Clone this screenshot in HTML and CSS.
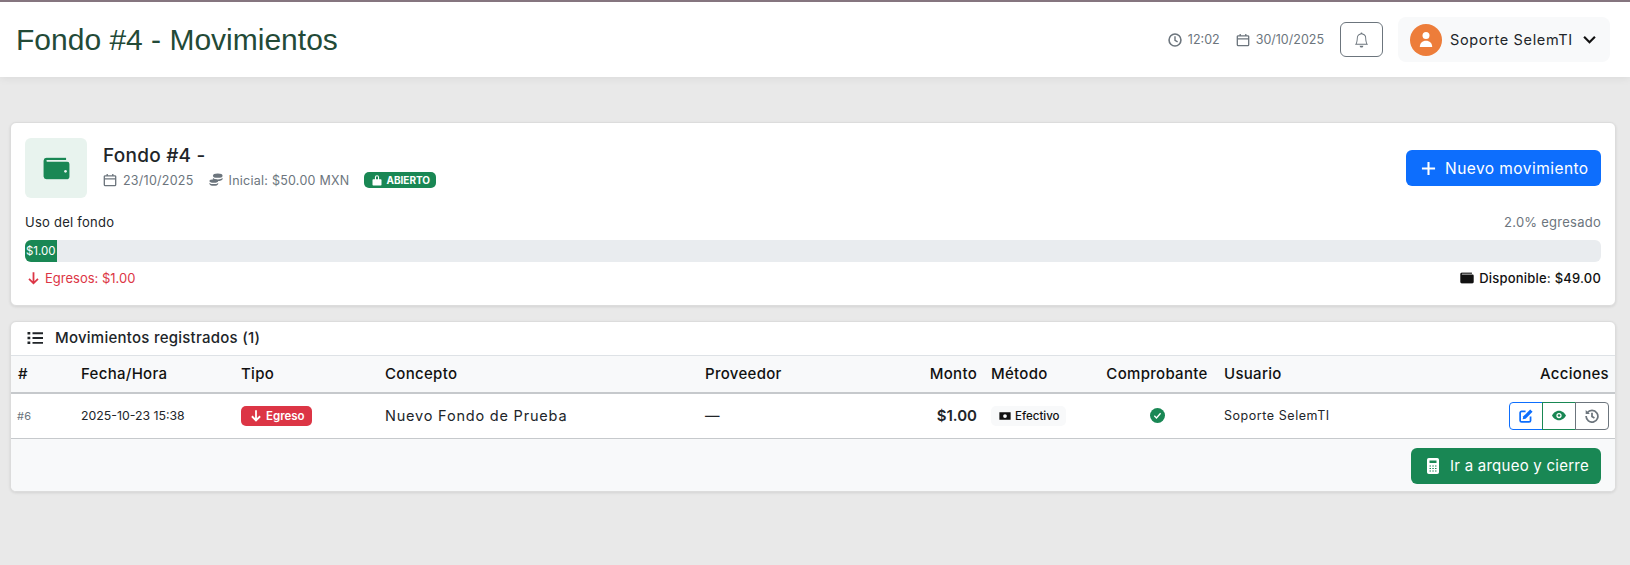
FILE: index.html
```html
<!DOCTYPE html>
<html lang="es">
<head>
    <meta charset="UTF-8">
    <meta name="viewport" content="width=device-width, initial-scale=1.0">
    <title>Fondo #4 - Movimientos</title>
    <link rel="stylesheet" href="styles.css">
</head>
<body>
    <svg class="sprites" width="0" height="0">
        <symbol id="i-calendar" viewBox="0 0 16 16">
            <path fill="none" stroke="currentColor" stroke-width="1.5" d="M2.500 3.200h11a1 1 0 0 1 1 1v9.300a1 1 0 0 1-1 1h-11a1 1 0 0 1-1-1V4.200a1 1 0 0 1 1-1zM1.500 6.700h13M4.800 1v3M11.200 1v3"/>
        </symbol>
        <symbol id="i-wallet" viewBox="0 0 24 20">
            <path fill="currentColor" d="M3 .5h17.500v2H3.500a.9.900 0 0 0 0 1.500H21.500a2 2 0 0 1 2 2V17a2.500 2.500 0 0 1-2.500 2.500H3A2.800 2.800 0 0 1 .5 17V3A2.700 2.700 0 0 1 3 .5z"/>
        </symbol>
    </svg>

    <header class="topbar">
        <h1>Fondo #4 - Movimientos</h1>
        <div class="topbar-right">
            <span class="stamp">
                <svg class="ic" viewBox="0 0 16 16"><circle cx="8" cy="8" r="6.800" fill="none" stroke="currentColor" stroke-width="1.800"/><path fill="none" stroke="currentColor" stroke-width="1.600" d="M8 3.800V8.300l3 1.800"/></svg>
                12:02
            </span>
            <span class="stamp">
                <svg class="ic"><use href="#i-calendar"/></svg>
                30/10/2025
            </span>
            <button type="button" class="btn-bell">
                <svg viewBox="0 0 16 16"><path fill="currentColor" d="M8 16a2 2 0 0 0 2-2H6a2 2 0 0 0 2 2zM8 1.918l-.797.161A4.002 4.002 0 0 0 4 6c0 .628-.134 2.197-.459 3.742-.16.767-.376 1.566-.663 2.258h10.244c-.287-.692-.502-1.49-.663-2.258C12.134 8.197 12 6.628 12 6a4.002 4.002 0 0 0-3.203-3.920L8 1.917zM14.220 12c.223.447.481.801.78 1H1c.299-.199.557-.553.78-1C2.680 10.200 3 6.880 3 6c0-2.420 1.720-4.440 4.005-4.901a1 1 0 1 1 1.990 0A5.002 5.002 0 0 1 13 6c0 .880.320 4.200 1.220 6z"/></svg>
            </button>
            <div class="user-pill">
                <span class="avatar">
                    <svg viewBox="0 0 16 16"><circle cx="8" cy="4" r="3.500" fill="#fff"/><path fill="#fff" d="M1.800 15.500c0-4 2.500-6.300 6.200-6.300s6.200 2.300 6.200 6.300z"/></svg>
                </span>
                <span class="user-name">Soporte SelemTI</span>
                <svg class="chev" viewBox="0 0 12 8"><path fill="none" stroke="currentColor" stroke-width="2" d="M1 1.500l5 5 5-5"/></svg>
            </div>
        </div>
    </header>

    <main class="content">
        <section class="card">
            <div class="fund-head">
                <div class="fund-icon">
                    <svg viewBox="0 0 24 20"><use href="#i-wallet"/><circle cx="20" cy="12.500" r="1.200" fill="#e8f3ee"/></svg>
                </div>
                <div class="fund-info">
                    <h2>Fondo #4 -</h2>
                    <div class="fund-meta">
                        <span class="meta-item"><svg class="ic"><use href="#i-calendar"/></svg>23/10/2025</span>
                        <span class="meta-item">
                            <svg class="ic" viewBox="0 0 16 16"><g fill="currentColor"><ellipse cx="10" cy="3" rx="5.500" ry="2.500"/><path d="M4.500 5.500c1 1.400 2.800 1.800 5.500 1.800s4.500-.4 5.500-1.800v1.700c-.5 1.300-2.500 2-5.500 2s-5-.7-5.500-2z"/><ellipse cx="5.500" cy="9" rx="5" ry="2"/><path d="M.5 11c1 1.300 2.600 1.600 5 1.600s4-.3 5-1.600v1.500c-.5 1.400-2.300 2.200-5 2.200s-4.500-.8-5-2.200z"/></g></svg>
                            Inicial: $50.00 MXN
                        </span>
                        <span class="badge-open">
                            <svg viewBox="0 0 12 14"><path fill="currentColor" d="M3.500 6V3.700a2.500 2.500 0 0 1 5 0V6H7.200V3.700a1.200 1.200 0 0 0-2.400 0V6zM1.500 6h9a.9.900 0 0 1 .9.900v5.700a.9.900 0 0 1-.9.900h-9a.9.900 0 0 1-.9-.9V6.900A.9.900 0 0 1 1.500 6z"/></svg>
                            ABIERTO
                        </span>
                    </div>
                </div>
                <button type="button" class="btn btn-blue">
                    <svg viewBox="0 0 16 16"><path fill="none" stroke="currentColor" stroke-width="2.200" d="M8 1v14M1 8h14"/></svg>
                    Nuevo movimiento
                </button>
            </div>

            <div class="usage-labels">
                <span>Uso del fondo</span>
                <span class="muted">2.0% egresado</span>
            </div>
            <div class="progress">
                <div class="progress-bar" style="width: 2%">$1.00</div>
            </div>
            <div class="usage-totals">
                <span class="out">
                    <svg viewBox="0 0 16 16"><path fill="none" stroke="#dc3545" stroke-width="2.200" d="M8 1v13.500M2.500 9l5.500 5.500L13.500 9"/></svg>
                    Egresos: $1.00
                </span>
                <span class="left">
                    <svg viewBox="0 0 24 20"><use href="#i-wallet"/></svg>
                    Disponible: $49.00
                </span>
            </div>
        </section>

        <section class="card card-table">
            <div class="table-title">
                <svg viewBox="0 0 16 14"><path fill="#212529" d="M.5 1h2.800v2.400H.5zM.5 5.800h2.800v2.400H.5zM.5 10.600h2.800V13H.5zM5.500 1.300H16v1.900H5.500zM5.500 6.100H16V8H5.500zM5.500 10.900H16v1.900H5.500z"/></svg>
                Movimientos registrados (1)
            </div>
            <table class="moves">
                <thead>
                    <tr>
                        <th class="c-id">#</th>
                        <th class="c-date">Fecha/Hora</th>
                        <th class="c-type">Tipo</th>
                        <th class="c-concept">Concepto</th>
                        <th class="c-prov">Proveedor</th>
                        <th class="c-amount">Monto</th>
                        <th class="c-method">Método</th>
                        <th class="c-proof">Comprobante</th>
                        <th class="c-user">Usuario</th>
                        <th class="c-actions">Acciones</th>
                    </tr>
                </thead>
                <tbody>
                    <tr>
                        <td class="c-id row-id">#6</td>
                        <td class="c-date small">2025-10-23 15:38</td>
                        <td class="c-type">
                            <span class="badge-out">
                                <svg viewBox="0 0 16 16"><path fill="none" stroke="currentColor" stroke-width="2.400" d="M8 1v13.500M2.500 9l5.500 5.500L13.500 9"/></svg>
                                Egreso
                            </span>
                        </td>
                        <td class="c-concept concept">Nuevo Fondo de Prueba</td>
                        <td class="c-prov">—</td>
                        <td class="c-amount amount">$1.00</td>
                        <td class="c-method">
                            <span class="badge-method">
                                <svg viewBox="0 0 16 12"><path fill-rule="evenodd" fill="#111" d="M.5 1h15v10H.5zM8 3.500a2.500 2.500 0 1 0 0 5 2.500 2.500 0 0 0 0-5z"/></svg>
                                Efectivo
                            </span>
                        </td>
                        <td class="c-proof">
                            <svg class="check" viewBox="0 0 16 16"><circle cx="8" cy="8" r="8" fill="#198754"/><path fill="none" stroke="#fff" stroke-width="1.400" d="M4.600 8.300l2.300 2.300 4.400-5"/></svg>
                        </td>
                        <td class="c-user user-cell">Soporte SelemTI</td>
                        <td class="c-actions">
                            <div class="btn-group">
                                <button type="button" class="act act-blue">
                                    <svg viewBox="0 0 16 16"><path fill="none" stroke="currentColor" stroke-width="2" d="M7.500 2.800H3a1.700 1.700 0 0 0-1.700 1.700V13A1.700 1.700 0 0 0 3 14.700h8.500a1.700 1.700 0 0 0 1.700-1.700V8.500"/><path fill="currentColor" d="M12.800.5l2.700 2.700-7.900 7.900-3.400.7.700-3.400z"/></svg>
                                </button>
                                <button type="button" class="act act-green">
                                    <svg viewBox="0 0 16 12"><path fill-rule="evenodd" fill="currentColor" d="M8 .5c3.800 0 6.800 3 8 5.500-1.200 2.500-4.200 5.500-8 5.500S1.200 8.500 0 6C1.200 3.500 4.200.5 8 .5zM8 3a3 3 0 1 0 0 6 3 3 0 0 0 0-6z"/><circle cx="8" cy="6" r="1.500" fill="currentColor"/></svg>
                                </button>
                                <button type="button" class="act act-gray">
                                    <svg viewBox="0 0 16 16"><path fill="none" stroke="currentColor" stroke-width="2" d="M2.600 4.300A6.700 6.700 0 1 1 1.300 8M8 4.200v4.300l2.800 1.700"/><path fill="currentColor" d="M.8 1v4.800h4.800z"/></svg>
                                </button>
                            </div>
                        </td>
                    </tr>
                </tbody>
            </table>
            <div class="table-foot">
                <button type="button" class="btn btn-green">
                    <svg viewBox="0 0 12 16"><path fill-rule="evenodd" fill="currentColor" d="M1.800 0h8.400A1.800 1.800 0 0 1 12 1.800v12.400a1.800 1.800 0 0 1-1.800 1.800H1.800A1.800 1.800 0 0 1 0 14.200V1.800A1.800 1.800 0 0 1 1.800 0zM2.500 2.500v2.500h7V2.500zM2.500 7.500v1h1.500v-1zM5.300 7.500v1h1.500v-1zM8 7.500v1h1.500v-1zM2.500 10v1h1.500v-1zM5.300 10v1h1.500v-1zM8 10v1h1.500v-1zM2.500 12.500v1h1.500v-1zM5.300 12.500v1h1.500v-1zM8 12.500v1h1.500v-1z"/></svg>
                    Ir a arqueo y cierre
                </button>
            </div>
        </section>
    </main>
</body>
</html>
```

FILE: styles.css
```css
* {
    box-sizing: border-box;
}
body {
    font-family: Inter, "Noto Sans", Arial, sans-serif;
    background-color: #e9e9e9;
    color: #212529;
    margin: 0;
    padding: 0;
    height: 565px;
    overflow: hidden;
    font-size: 14px;
    letter-spacing: 0.25px;
}
.sprites {
    display: block;
    height: 0;
}
button {
    font-family: inherit;
    letter-spacing: inherit;
}
svg {
    display: block;
}
.ic {
    width: 14px;
    height: 14px;
    flex: none;
}

/* barra superior */
.topbar {
    height: 77px;
    background-color: #fff;
    border-top: 2px solid #85757f;
    box-shadow: 0 2px 8px rgba(0, 0, 0, 0.06);
    padding: 0 20px 0 16px;
    display: flex;
    align-items: center;
    justify-content: space-between;
}
h1 {
    font-family: "Liberation Sans", Arial, sans-serif;
    font-size: 30px;
    font-weight: 400;
    letter-spacing: 0;
    color: #234a37;
    margin: 0;
}
.topbar-right {
    display: flex;
    align-items: center;
}
.stamp {
    display: flex;
    align-items: center;
    gap: 6px;
    font-size: 12.500px;
    color: #6c757d;
    letter-spacing: 0;
    margin-right: 16px;
}
.btn-bell {
    width: 43px;
    height: 35px;
    background: #fff;
    border: 1px solid #6c757d;
    border-radius: 6px;
    color: #6c757d;
    display: flex;
    align-items: center;
    justify-content: center;
    margin-right: 15px;
    padding: 0;
}
.btn-bell svg {
    width: 15px;
    height: 16px;
}
.user-pill {
    width: 212px;
    height: 45px;
    background-color: #f8f9fa;
    border-radius: 8px;
    padding: 0 14px 0 12px;
    display: flex;
    align-items: center;
}
.avatar {
    width: 32px;
    height: 32px;
    border-radius: 50%;
    background-color: #ed7d3a;
    display: flex;
    align-items: center;
    justify-content: center;
    margin-right: 8px;
}
.avatar svg {
    width: 16px;
    height: 17px;
}
.user-name {
    font-size: 14.500px;
    letter-spacing: 0.65px;
    color: #212529;
    flex: 1;
}
.chev {
    width: 13px;
    height: 9px;
    color: #111;
}

/* tarjetas */
.content {
    padding: 45px 14px 0 10px;
}
.card {
    background-color: #fff;
    border: 1px solid #dcdcdc;
    border-radius: 6px;
    box-shadow: 0 1px 3px rgba(0, 0, 0, 0.1);
    padding: 15px 14px 12px 14px;
    margin-bottom: 15px;
    height: 184px;
}
.fund-head {
    display: flex;
    align-items: center;
    margin-bottom: 16px;
}
.fund-icon {
    width: 62px;
    height: 60px;
    border-radius: 6px;
    background-color: #e8f3ee;
    color: #198754;
    display: flex;
    align-items: center;
    justify-content: center;
    margin-right: 16px;
}
.fund-icon svg {
    width: 27px;
    height: 23px;
}
.fund-info {
    flex: 1;
    padding-bottom: 4px;
}
h2 {
    font-size: 19px;
    font-weight: 500;
    margin: 0 0 5px 0;
    color: #212529;
}
.fund-meta {
    display: flex;
    align-items: center;
    font-size: 12.500px;
    color: #6c757d;
}
.meta-item {
    display: flex;
    align-items: center;
    gap: 6px;
    margin-right: 15px;
}
.badge-open {
    display: flex;
    align-items: center;
    gap: 4px;
    height: 16px;
    background-color: #198754;
    color: #fff;
    border-radius: 5px;
    padding: 0 6px 0 8px;
    font-size: 10px;
    font-weight: 700;
    letter-spacing: 0;
}
.badge-open svg {
    width: 10px;
    height: 12px;
}
.btn {
    display: flex;
    align-items: center;
    border: none;
    border-radius: 6px;
    color: #fff;
    cursor: pointer;
    font-size: 15px;
    height: 36px;
}
.btn-blue {
    background-color: #0d6efd;
    width: 195px;
    padding: 0 0 0 15px;
    gap: 9px;
    font-size: 15.500px;
    letter-spacing: 0.45px;
}
.btn-blue svg {
    width: 15px;
    height: 15px;
}
.btn-green {
    background-color: #198754;
    width: 190px;
    padding: 0 0 0 16px;
    gap: 11px;
}
.btn-green svg {
    width: 12px;
    height: 16px;
}
.usage-labels,
.usage-totals {
    display: flex;
    justify-content: space-between;
    align-items: center;
    font-size: 13px;
}
.usage-labels {
    margin-bottom: 10px;
    height: 16px;
}
.muted {
    color: #6c757d;
}
.progress {
    height: 22px;
    background-color: #e9ecef;
    border-radius: 6px;
    overflow: hidden;
    margin-bottom: 8px;
}
.progress-bar {
    height: 100%;
    min-width: 31px;
    background-color: #198754;
    color: #fff;
    font-size: 11.500px;
    letter-spacing: 0;
    display: flex;
    align-items: center;
    justify-content: center;
}
.out {
    color: #dc3545;
    display: flex;
    align-items: center;
    gap: 5px;
    padding-left: 2px;
    letter-spacing: 0;
}
.out svg {
    width: 13px;
    height: 14px;
}
.left {
    display: flex;
    align-items: center;
    gap: 5px;
    font-weight: 500;
    color: #111;
    letter-spacing: 0.2px;
}
.left svg {
    width: 14px;
    height: 12px;
}

/* tabla */
.card-table {
    padding: 0;
    height: 171px;
    overflow: hidden;
}
.table-title {
    height: 33px;
    display: flex;
    align-items: center;
    gap: 12px;
    padding: 0 0 2px 16px;
    font-size: 15px;
    font-weight: 500;
}
.table-title svg {
    width: 16px;
    height: 14px;
}
.moves {
    width: 100%;
    border-collapse: collapse;
    table-layout: fixed;
}
.moves th {
    height: 37px;
    background-color: #f8f9fa;
    border-top: 1px solid #dee2e6;
    border-bottom: 2px solid #c6c9cc;
    font-size: 15px;
    font-weight: 500;
    letter-spacing: 0.3px;
    text-align: left;
    padding: 0 7px;
    color: #111;
}
.moves td {
    height: 46px;
    padding: 0 7px;
    border-bottom: 1px solid #c6c9cc;
    font-size: 14.500px;
    color: #212529;
}
.c-id { width: 63px; }
.c-date { width: 160px; }
.c-type { width: 144px; }
.c-concept { width: 320px; }
.c-prov { width: 136px; }
.c-amount { width: 150px; }
.moves th.c-amount,
.c-amount { text-align: right; }
.c-method { width: 113px; }
.c-proof { width: 120px; }
.moves th.c-proof { text-align: center; }
.c-user { width: 200px; }
.moves th.c-actions { text-align: right; padding-right: 6px; }
.moves td.c-actions { padding-right: 6px; }
.moves .row-id {
    font-size: 11px;
    color: #6c757d;
    padding-left: 6px;
}
.moves .small {
    font-size: 12.300px;
    letter-spacing: 0;
}
.moves .user-cell {
    font-size: 12.500px;
    letter-spacing: 0.55px;
}
.concept {
    letter-spacing: 0.8px;
}
.moves .amount {
    font-size: 15px;
    font-weight: 600;
    letter-spacing: 0;
}
.badge-out {
    display: inline-flex;
    align-items: center;
    gap: 4px;
    height: 20px;
    background-color: #dc3545;
    color: #fff;
    border-radius: 5px;
    padding: 0 7px 0 9px;
    font-size: 11.500px;
    font-weight: 600;
    letter-spacing: 0;
}
.badge-out svg {
    width: 12px;
    height: 13px;
}
.badge-method {
    display: inline-flex;
    align-items: center;
    gap: 4px;
    height: 20px;
    background-color: #f8f9fa;
    border-radius: 5px;
    padding: 0 6px 0 8px;
    font-size: 11.500px;
    font-weight: 500;
    color: #111;
    letter-spacing: 0;
}
.badge-method svg {
    width: 12px;
    height: 10px;
}
.check {
    width: 15px;
    height: 15px;
    margin: 0 auto;
}
.btn-group {
    display: flex;
    justify-content: flex-end;
}
.act {
    width: 34px;
    height: 28px;
    background: #fff;
    padding: 0;
    margin-left: -1px;
    display: flex;
    align-items: center;
    justify-content: center;
    border: 1px solid currentColor;
}
.act svg {
    width: 14px;
    height: 14px;
}
.act-green svg {
    height: 11px;
}
.act-blue {
    color: #0d6efd;
    border-radius: 4px 0 0 4px;
}
.act-green {
    color: #198754;
}
.act-gray {
    color: #6c757d;
    border-radius: 0 4px 4px 0;
}
.table-foot {
    background-color: #f8f9fa;
    height: 53px;
    display: flex;
    justify-content: flex-end;
    align-items: center;
    padding-right: 14px;
}
```
